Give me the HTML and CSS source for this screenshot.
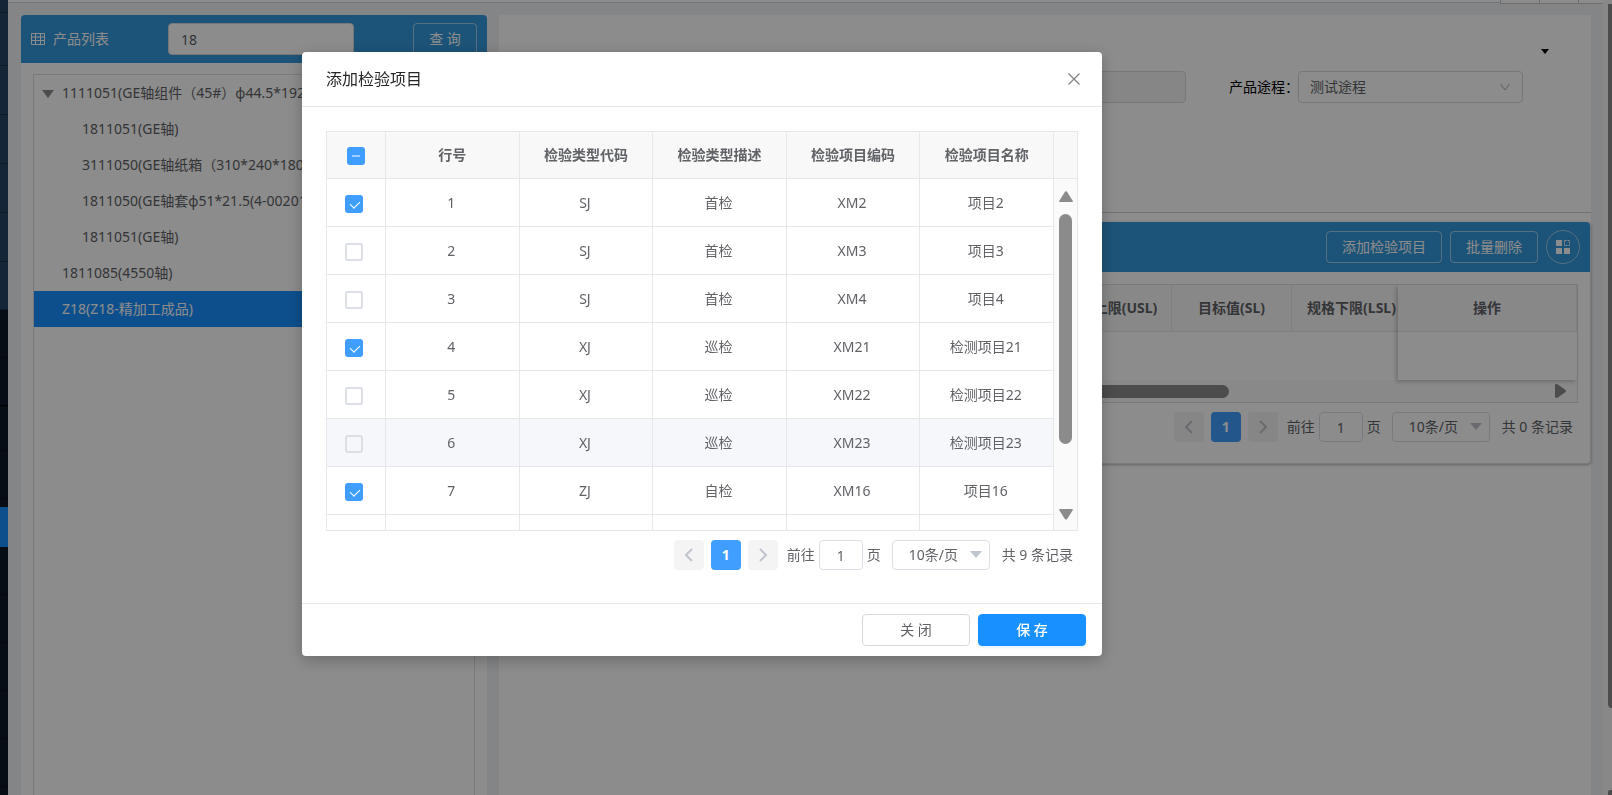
FILE: index.html
```html
<!DOCTYPE html>
<html lang="zh-CN">
<head>
<meta charset="utf-8">
<title>添加检验项目</title>
<link rel="stylesheet" href="styles.css">
</head>
<body>
<div class="app">
  <nav class="rail" aria-label="主菜单">
    <div class="rail-item rail-first"></div>
    <div class="rail-item"></div>
    <div class="rail-item"></div>
    <div class="rail-item"></div>
    <div class="rail-item"></div>
    <div class="rail-item"></div>
    <div class="rail-item"></div>
    <div class="rail-item rail-sub"></div>
    <div class="rail-item rail-sub rail-open"></div>
    <div class="rail-item rail-sub"></div>
    <div class="rail-item rail-sub"></div>
    <div class="rail-item rail-active"></div>
    <div class="rail-item rail-sub"></div>
    <div class="rail-item rail-sub"></div>
    <div class="rail-item rail-sub"></div>
    <div class="rail-item rail-sub"></div>
    <div class="rail-item rail-sub"></div>
  </nav>
  <div class="workspace">
    <div class="tabs"><span class="tab-tool"></span><span class="tab-tool"></span><span class="tab-tool tab-last"></span></div>
    <main class="columns">
      <section class="card products">
        <header class="bar">
          <svg class="grid-icon" viewBox="0 0 14 12" fill="none" stroke="currentColor"><path d="M.5.5h13v11H.5zM.5 4h13M.5 7.5h13M4.5.5v11M9.5.5v11"/></svg>
          <label class="bar-title" for="keyword">产品列表</label>
          <input class="field search" id="keyword" type="text" value="18">
          <button class="ghost search-button" type="button">查 询</button>
        </header>
        <ul class="tree">
          <li class="node"><svg class="node-caret" viewBox="0 0 12 8" fill="currentColor"><path d="M0 0h12L6 8z"/></svg>1111051(GE轴组件（45#）φ44.5*192.2)</li>
          <li class="node child">1811051(GE轴)</li>
          <li class="node child">3111050(GE轴纸箱（310*240*180）)</li>
          <li class="node child">1811050(GE轴套φ51*21.5(4-002010))</li>
          <li class="node child">1811051(GE轴)</li>
          <li class="node">1811085(4550轴)</li>
          <li class="node selected">Z18(Z18-精加工成品)</li>
        </ul>
      </section>
      <section class="detail">
        <div class="query">
          <svg class="fold" viewBox="0 0 8 5" fill="currentColor"><path d="M0 0h8L4 5z"/></svg>
          <div class="query-row">
            <input class="field locked" type="text" aria-label="产品" disabled>
            <label class="query-label" for="route">产品途程：</label>
            <div class="picker route">
              <select class="field" id="route"><option>测试途程</option></select>
              <svg class="chevron" viewBox="0 0 10 8" fill="none" stroke="currentColor"><path d="M.5 1 5 7l4.500-6"/></svg>
            </div>
          </div>
        </div>
        <div class="card items">
          <header class="bar items-bar">
            <button class="ghost" type="button">添加检验项目</button>
            <button class="ghost" type="button">批量删除</button>
            <button class="ghost round" type="button" aria-label="列设置"><svg class="tiles" viewBox="0 0 14 14" fill="currentColor"><path d="M0 0h6v6H0zM0 8h6v6H0zM8 8h6v6H8z"/><path d="M8.500.5h5v5h-5z" fill="none" stroke="currentColor" stroke-dasharray="2 1"/></svg></button>
          </header>
          <div class="list">
            <table class="grid wide">
              <colgroup><col><col class="c-mid"><col class="c-mid"><col class="c-mid"><col class="c-rest"></colgroup>
              <thead><tr><th></th><th>规格上限(USL)</th><th>目标值(SL)</th><th>规格下限(LSL)</th><th></th></tr></thead>
              <tbody><tr><td colspan="5"></td></tr></tbody>
            </table>
            <table class="grid pinned">
              <thead><tr><th>操作</th></tr></thead>
              <tbody><tr><td></td></tr></tbody>
            </table>
            <div class="hscroll">
              <span class="hthumb"></span>
              <svg class="harrow" viewBox="0 0 11 14" fill="currentColor"><path d="M0 1Q0 0 2 0l8 5.500Q12 7 10 8.500L2 14Q0 14 0 13z"/></svg>
            </div>
          </div>
          <div class="pager">
            <button class="page-button" type="button" aria-label="上一页"><svg class="arrow" viewBox="0 0 8 14"><path d="M7 1 1 7l6 6"/></svg></button>
            <button class="page-button current" type="button">1</button>
            <button class="page-button" type="button" aria-label="下一页"><svg class="arrow" viewBox="0 0 8 14"><path d="m1 1 6 6-6 6"/></svg></button>
            <label class="jump" for="jump-a">前往</label>
            <input class="page-input" id="jump-a" type="text" value="1">
            <span class="unit">页</span>
            <div class="picker size">
              <select class="page-size" aria-label="每页条数"><option>10条/页</option></select>
              <svg class="drop" viewBox="0 0 12 7" fill="currentColor"><path d="M0 0h12L6 7z"/></svg>
            </div>
            <span class="total">共 0 条记录</span>
          </div>
        </div>
      </section>
    </main>
  </div>
  <div class="vscroll"><span class="vthumb"></span><span class="vend"></span></div>
</div>

<div class="mask"></div>
<div class="modal" role="dialog" aria-labelledby="modal-title">
  <header class="modal-head">
    <h2 class="modal-title" id="modal-title">添加检验项目</h2>
    <button class="close" type="button" aria-label="关闭"><svg class="cross" viewBox="0 0 12 12" fill="none" stroke="currentColor" stroke-width="1.200"><path d="m.5.5 11 11m0-11-11 11"/></svg></button>
  </header>
  <div class="modal-body">
    <div class="sheet">
      <table class="grid rows">
        <colgroup><col class="c-check"><col><col><col><col><col><col class="c-scroll"></colgroup>
        <thead>
          <tr><th><input class="tick partial" type="checkbox" aria-label="全选"></th><th>行号</th><th>检验类型代码</th><th>检验类型描述</th><th>检验项目编码</th><th>检验项目名称</th><th></th></tr>
        </thead>
        <tbody>
          <tr><td><input class="tick" type="checkbox" aria-label="选择第1行" checked></td><td>1</td><td>SJ</td><td>首检</td><td>XM2</td><td>项目2</td>
            <td class="scroll-cell" rowspan="8"></td></tr>
          <tr><td><input class="tick" type="checkbox" aria-label="选择第2行"></td><td>2</td><td>SJ</td><td>首检</td><td>XM3</td><td>项目3</td></tr>
          <tr><td><input class="tick" type="checkbox" aria-label="选择第3行"></td><td>3</td><td>SJ</td><td>首检</td><td>XM4</td><td>项目4</td></tr>
          <tr><td><input class="tick" type="checkbox" aria-label="选择第4行" checked></td><td>4</td><td>XJ</td><td>巡检</td><td>XM21</td><td>检测项目21</td></tr>
          <tr><td><input class="tick" type="checkbox" aria-label="选择第5行"></td><td>5</td><td>XJ</td><td>巡检</td><td>XM22</td><td>检测项目22</td></tr>
          <tr class="hover"><td><input class="tick" type="checkbox" aria-label="选择第6行"></td><td>6</td><td>XJ</td><td>巡检</td><td>XM23</td><td>检测项目23</td></tr>
          <tr><td><input class="tick" type="checkbox" aria-label="选择第7行" checked></td><td>7</td><td>ZJ</td><td>自检</td><td>XM16</td><td>项目16</td></tr>
          <tr><td></td><td></td><td></td><td></td><td></td><td></td></tr>
        </tbody>
      </table>
      <div class="sheet-scroll">
        <svg class="sarrow" viewBox="0 0 14 11" fill="currentColor"><path d="M1 11Q-.5 11 .5 9.500L5.500 1.500Q7-.8 8.500 1.500l5 8Q14.500 11 13 11z"/></svg>
        <span class="sthumb"></span>
        <svg class="sarrow" viewBox="0 0 14 11" fill="currentColor"><path d="M1 0Q-.5 0 .5 1.500l5 8Q7 11.800 8.500 9.500l5-8Q14.500 0 13 0z"/></svg>
      </div>
    </div>
    <div class="pager">
      <button class="page-button" type="button" aria-label="上一页"><svg class="arrow" viewBox="0 0 8 14"><path d="M7 1 1 7l6 6"/></svg></button>
      <button class="page-button current" type="button">1</button>
      <button class="page-button" type="button" aria-label="下一页"><svg class="arrow" viewBox="0 0 8 14"><path d="m1 1 6 6-6 6"/></svg></button>
      <label class="jump" for="jump-b">前往</label>
      <input class="page-input" id="jump-b" type="text" value="1">
      <span class="unit">页</span>
      <div class="picker size">
        <select class="page-size" aria-label="每页条数"><option>10条/页</option></select>
        <svg class="drop" viewBox="0 0 12 7" fill="currentColor"><path d="M0 0h12L6 7z"/></svg>
      </div>
      <span class="total">共 9 条记录</span>
    </div>
  </div>
  <footer class="modal-foot">
    <button class="action" type="button">关 闭</button>
    <button class="action primary" type="button">保 存</button>
  </footer>
</div>
</body>
</html>
```

FILE: styles.css
```css
* { box-sizing: border-box; }
body {
  margin: 0;
  height: 100vh;
  overflow: hidden;
  font: 14px/20px "Noto Sans", "Noto Sans CJK SC", sans-serif;
  color: #606266;
  background: #f0f2f5;
}
button, input, select { font: inherit; color: inherit; margin: 0; }
svg { display: block; flex: none; }
.app { display: flex; height: 100vh; }

/* collapsed menu rail */
.rail { width: 8px; flex: none; overflow: hidden; background: #0c1826; }
.rail-item { height: 49px; background: #264467; border-bottom: 1px solid #1b3049; }
.rail-first { height: 13px; }
.rail-item:nth-child(2) { height: 53px; }
.rail-item:nth-child(7) { height: 48px; }
.rail-sub { height: 48px; background: #0c1826; border-color: #08111c; }
.rail-open { height: 49px; box-shadow: inset 0 -1px 0 #000; }
.rail-item:nth-child(10) { height: 44px; }
.rail-active { height: 40px; margin-top: 8px; background: #1890ff; border: 0; }

.workspace { flex: 1; min-width: 0; display: flex; flex-direction: column; }
.tabs { height: 3px; background: #fff; border-bottom: 1px solid #d9d9d9; display: flex; justify-content: flex-end; }
.tab-tool { width: 39px; height: 4px; border: 1px solid #c8c8c8; border-width: 0 0 1px 1px; background: #fff; }
.tab-last { width: 25px; }
.columns {
  flex: 1;
  min-height: 0;
  display: grid;
  grid-template-columns: 299fr 701fr;
  gap: 12px;
  padding: 12px 12px 0 13px;
}
.card { background: #fff; border-radius: 4px 4px 0 0; }
.products { display: flex; flex-direction: column; min-width: 0; }
.bar {
  display: flex;
  align-items: center;
  padding: 0 10px;
  height: 48px;
  background: #3498db;
  color: #fff;
  border-radius: 4px 4px 0 0;
}
.grid-icon { width: 14px; height: 12px; }
.bar-title { margin-left: 8px; }
.field {
  height: 32px;
  padding: 0 12px;
  border: 1px solid #d9d9d9;
  border-radius: 4px;
  background: #fff;
  color: #606266;
}
.search { width: 186px; margin-left: 59px; }
.ghost {
  height: 32px;
  padding: 0 15px;
  border: 1px solid rgba(255, 255, 255, .5);
  border-radius: 4px;
  background: transparent;
  color: #fff;
}
.search-button { margin-left: auto; }

.tree {
  flex: 1;
  list-style: none;
  margin: 11px 12px 0;
  padding: 0;
  border: 1px solid #dcdfe6;
  border-bottom: 0;
  overflow: hidden;
}
.node { position: relative; height: 36px; line-height: 36px; padding-left: 28px; white-space: nowrap; }
.child { padding-left: 48px; }
.selected { background: #1890ff; color: #fff; }
.node-caret { position: absolute; left: 8px; top: 15px; width: 12px; height: 8px; color: #8a8c90; }

.detail { background: #fff; min-width: 0; }
.query { height: 198px; padding: 34px 68px 0 12px; border-bottom: 1px solid #d0d0d0; }
.fold { width: 8px; height: 5px; margin: 0 -26px 17px auto; color: #000; }
.query-row { display: flex; align-items: center; }
.locked { flex: 1; min-width: 0; background: #f5f5f5; }
.query-label { margin-left: 43px; width: 69px; white-space: nowrap; color: #000; }
.picker { position: relative; color: #606266; }
.picker select { width: 100%; appearance: none; }
.route { width: 225px; }
.route select { padding-left: 11px; }
.chevron { position: absolute; right: 13px; top: 12px; width: 10px; height: 8px; color: #a8abb2; }

.items { margin-top: 9px; border: 1px solid #dcdfe6; border-width: 0 1px 1px 0; border-radius: 4px; box-shadow: 0 1px 3px rgba(0, 0, 0, .3); padding-bottom: 21px; }
.items-bar { height: 50px; justify-content: flex-end; gap: 8px; }
.round { display: grid; place-items: center; width: 34px; height: 34px; padding: 0; border-radius: 50%; }
.tiles { width: 14px; height: 14px; }

.grid { border-collapse: separate; border-spacing: 0; table-layout: fixed; width: 100%; text-align: center; }
.grid th, .grid td { height: 48px; padding: 0; border: 1px solid #e6e8eb; border-width: 0 1px 1px 0; white-space: nowrap; }
.grid th { height: 47px; background: #f8f8f9; font-weight: 700; }
.list { position: relative; margin: 12px 12px 0; border: 1px solid #dcdfe6; }
.list .grid td { border: 0; background: #fff; }
.c-mid { width: 120px; }
.c-rest { width: 165px; }
.list .pinned { position: absolute; top: 0; right: 0; width: 179px; box-shadow: -2px 2px 4px rgba(0, 0, 0, .2); }
.hscroll { display: flex; align-items: center; height: 22px; padding-right: 11px; background: #fafafa; }
.hthumb { width: 68%; height: 13px; border-radius: 8px; background: #8b8b8b; }
.harrow { width: 11px; height: 14px; margin-left: auto; color: #8b8b8b; }

.pager { display: flex; align-items: center; justify-content: flex-end; height: 30px; margin-top: 9px; padding-right: 5px; }
.items .pager { margin-right: 12px; }
.page-button { display: grid; place-items: center; width: 30px; height: 30px; padding: 0; margin-right: 7px; border: 0; border-radius: 4px; background: #f4f4f5; }
.current { background: #409eff; color: #fff; font-weight: 700; }
.arrow { width: 8px; height: 14px; fill: none; stroke: #c0c4cc; stroke-width: 2; }
.jump { margin: 0 4px 0 2px; }
.page-input { width: 44px; height: 30px; padding: 0; text-align: center; border: 1px solid #dcdfe6; border-radius: 4px; background: #fff; }
.unit { margin: 0 11px 0 4px; }
.size { width: 98px; }
.page-size { height: 30px; padding: 0 16px; border: 1px solid #dcdfe6; border-radius: 4px; background: #fff; }
.drop { position: absolute; right: 8px; top: 11px; width: 12px; height: 7px; color: #c0c4cc; }
.total { margin-left: 12px; white-space: nowrap; }

.vscroll { width: 9px; flex: none; display: flex; flex-direction: column; justify-content: space-between; align-items: flex-end; padding-top: 4px; background: #f8f8f8; }
.vthumb { width: 4px; height: 89%; border-bottom-left-radius: 4px; background: #8b8b8b; }
.vend { width: 4px; height: 5px; background: #8b8b8b; border-top-left-radius: 2px; }

.mask { position: fixed; inset: 0; background: rgba(0, 0, 0, .45); }
.modal {
  position: fixed;
  top: 52px;
  left: 302px;
  width: 800px;
  background: #fff;
  border-radius: 4px;
  box-shadow: 0 4px 16px rgba(0, 0, 0, .25);
}
.modal-head { display: flex; align-items: center; justify-content: space-between; height: 55px; padding: 0 22px 0 24px; border-bottom: 1px solid #e8e8e8; }
.modal-title { margin: 0; font-size: 16px; line-height: 24px; font-weight: 400; color: #262626; }
.close { padding: 0; border: 0; background: none; color: #808080; }
.cross { width: 12px; height: 12px; }
.modal-body { padding: 24px 24px 33px; }
.sheet { position: relative; height: 400px; overflow: hidden; border: 1px solid #e6e8eb; }
.rows th:last-child, .rows .scroll-cell { border-right: 0; }
.rows td:not(:first-child) { padding-right: 2px; }
.c-check { width: 59px; }
.c-scroll { width: 23px; }
.hover td { background: #f5f7fa; }
.rows .scroll-cell { background: #fafafa; }
.tick {
  appearance: none;
  display: block;
  width: 18px;
  height: 18px;
  margin: 2px auto 0 18px;
  border: 2px solid #dcdfe6;
  border-radius: 3px;
}
.tick:checked, .partial { border-color: #409eff; background: #409eff; }
.tick:checked::after {
  content: "";
  display: block;
  width: 5px;
  height: 8px;
  margin: 2px 5px;
  border: solid #fff;
  border-width: 0 1px 1px 0;
  transform: rotate(45deg);
}
.partial { margin-left: 20px; }
.partial::after { content: ""; display: block; width: 8px; height: 2px; margin: 6px 3px; background: #a0cfff; }
.sheet-scroll { position: absolute; top: 48px; right: 0; bottom: 0; width: 23px; display: flex; flex-direction: column; align-items: center; padding: 11px 0 10px; color: #8b8b8b; }
.sarrow { width: 14px; height: 11px; }
.sthumb { width: 13px; height: 70%; margin: 12px 0 auto; border-radius: 8px; background: #8b8b8b; }
.modal-foot { display: flex; justify-content: flex-end; gap: 8px; padding: 10px 16px; border-top: 1px solid #e8e8e8; }
.action { width: 108px; height: 32px; border: 1px solid #d9d9d9; border-radius: 4px; background: #fff; }
.primary { border-color: #1890ff; background: #1890ff; color: #fff; font-weight: 500; box-shadow: 0 2px 2px rgba(24, 144, 255, .1); }
```
